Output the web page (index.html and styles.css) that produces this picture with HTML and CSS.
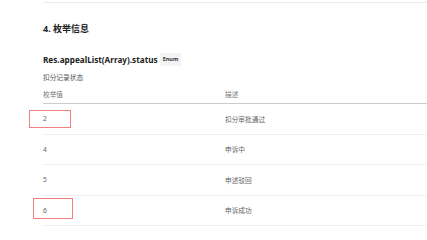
FILE: index.html
```html
<!DOCTYPE html>
<html lang="zh">
<head>
<meta charset="utf-8">
<link rel="stylesheet" href="styles.css">
</head>
<body>
<div class="doc">
  <div class="topline"></div>
  <h2 class="title">4. 枚举信息</h2>
  <div class="field">
    <span class="field-name">Res.appealList(Array).status</span>
    <span class="badge">Enum</span>
  </div>
  <p class="desc">扣分记录状态</p>
  <div class="table">
    <div class="row head">
      <div class="c1">枚举值</div>
      <div class="c2">描述</div>
    </div>
    <div class="row">
      <div class="c1">2</div>
      <div class="c2">扣分审批通过</div>
      <span class="mark mark1"></span>
    </div>
    <div class="row">
      <div class="c1">4</div>
      <div class="c2">申诉中</div>
    </div>
    <div class="row">
      <div class="c1">5</div>
      <div class="c2">申述驳回</div>
    </div>
    <div class="row">
      <div class="c1">6</div>
      <div class="c2">申诉成功</div>
      <span class="mark mark2"></span>
    </div>
  </div>
</div>
</body>
</html>
```
FILE: styles.css
```css
html, body {
  margin: 0;
  padding: 0;
  background: #fff;
}
body {
  font-family: "Noto Sans", "Noto Sans CJK SC", sans-serif;
  color: #333;
  overflow: hidden;
}
.doc {
  margin-left: 43px;
  padding-top: 2px;
}
.topline {
  border-top: 1px solid #ececec;
}
.title {
  margin: 19px 0 0;
  font-size: 9px;
  line-height: 14px;
  font-weight: bold;
  color: #222;
}
.field {
  display: flex;
  align-items: center;
  gap: 2px;
  margin-top: 16px;
  height: 14px;
}
.field-name {
  font-size: 8.2px;
  font-weight: bold;
  color: #222;
}
.badge {
  font-size: 5.5px;
  font-weight: bold;
  color: #333;
  background: #f3f3f3;
  padding: 3px 3px;
  line-height: 7px;
}
.desc {
  margin: 7px 0 0;
  font-size: 6.7px;
  line-height: 10px;
  color: #555;
}
.table {
  margin-top: 1px;
}
.row {
  position: relative;
  display: flex;
  align-items: center;
  height: 29.5px;
  border-bottom: 1px solid #efefef;
  font-size: 6.7px;
  color: #666;
}
.row.head {
  height: 19px;
  border-bottom: 1.5px solid #cccccc;
  color: #777;
}
.c1 {
  width: 182px;
}
.c2 {
  flex: 1;
}
.mark {
  position: absolute;
  border: 1px solid #f07f7f;
  box-sizing: border-box;
}
.mark1 {
  left: -14px;
  top: 6px;
  width: 42px;
  height: 18px;
}
.mark2 {
  left: -10px;
  top: 2px;
  width: 40px;
  height: 21px;
}
```
